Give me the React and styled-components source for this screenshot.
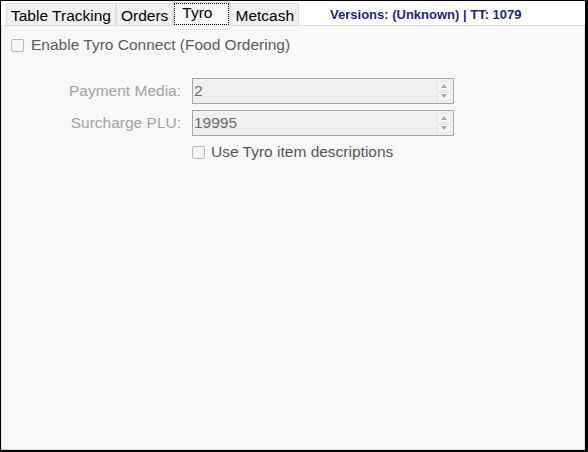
import React from "react";
import styled, { createGlobalStyle } from "styled-components";

const Global = createGlobalStyle`
  html, body { margin: 0; padding: 0; background: #fff; }
  * { box-sizing: border-box; }
`;

const Frame = styled.div`
  width: 588px;
  height: 452px;
  border-style: solid;
  border-color: #000;
  border-width: 1px 3px 2px 1px;
  background: #fff;
  display: flex;
  flex-direction: column;
  font-family: "Liberation Sans", Arial, sans-serif;
`;

const TabBar = styled.div`
  display: flex;
  align-items: flex-end;
  height: 24px;
  padding-left: 5px;
  position: relative;
  z-index: 1;
`;

const Tab = styled.div`
  height: ${(p) => (p.$active ? "24px" : "22px")};
  margin-bottom: ${(p) => (p.$active ? "-1px" : "0")};
  padding: ${(p) => (p.$active ? "0 17px 0 8px" : "2px 4px 0")};
  border: 1px solid #dcdcdc;
  border-bottom: none;
  background: ${(p) => (p.$active ? "#f8f8f8" : "#f0f0f0")};
  outline: ${(p) => (p.$active ? "1px dotted #000" : "none")};
  outline-offset: -2px;
  font-size: 15.5px;
  line-height: 20px;
  color: #000;
  white-space: nowrap;
`;

const Versions = styled.div`
  align-self: center;
  margin-left: 31px;
  margin-top: 2px;
  font-size: 13px;
  font-weight: bold;
  color: #1f1f8c;
  white-space: nowrap;
`;

const Panel = styled.div`
  flex: 1;
  border: 1px solid #dcdcdc;
  background: #f8f8f8;
  padding: 9px 9px;
  display: flex;
  flex-direction: column;
`;

const CheckRow = styled.label`
  display: flex;
  align-items: center;
  height: 20px;
  font-size: 15.5px;
  color: ${(p) => p.$color || "#5c5c5c"};
`;

const Box = styled.span`
  width: 13px;
  height: 13px;
  border: 1px solid #b8b8b8;
  border-radius: 2px;
  background: #f6f6f6;
  margin-right: ${(p) => p.$gap || 7}px;
  flex: none;
`;

const Form = styled.div`
  margin-top: 23px;
  display: grid;
  grid-template-columns: 170px 262px;
  column-gap: 11px;
  row-gap: 6px;
  align-items: center;
`;

const Label = styled.div`
  text-align: right;
  font-size: 15.5px;
  color: #a2a2a2;
  white-space: nowrap;
`;

const Input = styled.div`
  height: 26px;
  border: 1px solid #a3a3a3;
  background: #f0f0f0;
  display: flex;
  align-items: stretch;
  padding: 1px 2px 1px 1px;
`;

const Value = styled.div`
  flex: 1;
  font-size: 15.5px;
  line-height: 22px;
  color: #6a6a6a;
`;

const Spin = styled.div`
  width: 14px;
  display: flex;
  flex-direction: column;
  gap: 1px;
  padding: 1px 0;
`;

const SpinBtn = styled.div`
  flex: 1;
  background: #f6f6f6;
  border: 1px solid #e6e6e6;
  display: flex;
  align-items: center;
  justify-content: center;
`;

const Arrow = ({ up }) => (
  <svg width="6" height="4" viewBox="0 0 6 4">
    <path d={up ? "M0 4 L3 0 L6 4 Z" : "M0 0 L6 0 L3 4 Z"} fill="#a8a8a8" />
  </svg>
);

const Spinner = () => (
  <Spin>
    <SpinBtn><Arrow up /></SpinBtn>
    <SpinBtn><Arrow /></SpinBtn>
  </Spin>
);

const Cell = styled.div`
  grid-column: 2;
`;

export default function App() {
  return (
    <>
      <Global />
      <Frame>
        <TabBar>
          <Tab>Table Tracking</Tab>
          <Tab>Orders</Tab>
          <Tab $active>Tyro</Tab>
          <Tab>Metcash</Tab>
          <Versions>Versions: (Unknown) | TT: 1079</Versions>
        </TabBar>
        <Panel>
          <CheckRow>
            <Box />
            Enable Tyro Connect (Food Ordering)
          </CheckRow>
          <Form>
            <Label>Payment Media:</Label>
            <Input>
              <Value>2</Value>
              <Spinner />
            </Input>
            <Label>Surcharge PLU:</Label>
            <Input>
              <Value>19995</Value>
              <Spinner />
            </Input>
            <Cell>
              <CheckRow $color="#555">
                <Box $gap={6} />
                Use Tyro item descriptions
              </CheckRow>
            </Cell>
          </Form>
        </Panel>
      </Frame>
    </>
  );
}
